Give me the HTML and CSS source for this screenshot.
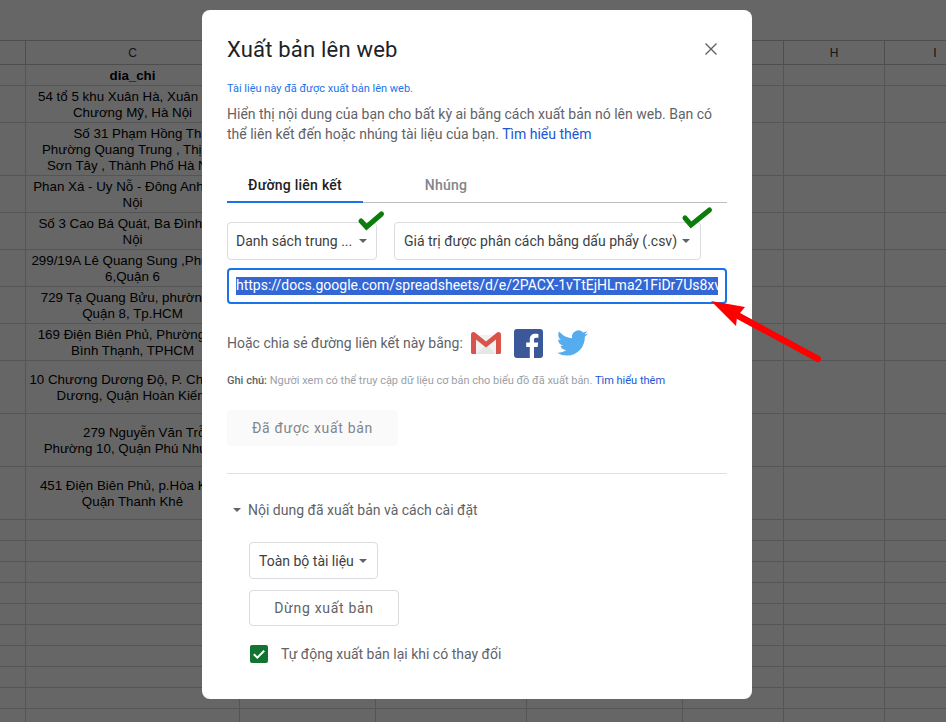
FILE: index.html
```html
<!DOCTYPE html>
<html lang="vi">
<head>
<meta charset="utf-8">
<title>Xuất bản lên web</title>
<link rel="stylesheet" href="styles.css">
</head>
<body>
<div class="sheet">
  <div class="row head"><i></i><div class="cell">C</div><i></i><i></i><i></i><i></i><div class="cell">H</div><div class="cell">I</div></div>
  <div class="row h21"><i></i><div class="cell"><b>dia_chi</b></div><i></i><i></i><i></i><i></i><i></i><i></i></div>
  <div class="row h37"><i></i><div class="cell"><span>54 tổ 5 khu Xuân Hà, Xuân Sơn</span><span>Chương Mỹ, Hà Nội</span></div><i></i><i></i><i></i><i></i><i></i><i></i></div>
  <div class="row h53"><i></i><div class="cell"><span class="shift">Số 31 Phạm Hồng Thái,</span><span>Phường Quang Trung , Thị xã,</span><span>Sơn Tây , Thành Phố Hà Nội</span></div><i></i><i></i><i></i><i></i><i></i><i></i></div>
  <div class="row h37"><i></i><div class="cell"><span>Phan Xá - Uy Nỗ - Đông Anh, Hà,</span><span>Nội</span></div><i></i><i></i><i></i><i></i><i></i><i></i></div>
  <div class="row h37"><i></i><div class="cell"><span>Số 3 Cao Bá Quát, Ba Đình, Hà</span><span>Nội</span></div><i></i><i></i><i></i><i></i><i></i><i></i></div>
  <div class="row h37"><i></i><div class="cell"><span>299/19A Lê Quang Sung ,Phường</span><span>6,Quận 6</span></div><i></i><i></i><i></i><i></i><i></i><i></i></div>
  <div class="row h37"><i></i><div class="cell"><span>729 Tạ Quang Bửu, phường 4,</span><span>Quận 8, Tp.HCM</span></div><i></i><i></i><i></i><i></i><i></i><i></i></div>
  <div class="row h37"><i></i><div class="cell"><span>169 Điện Biên Phủ, Phường 22,</span><span>Bình Thạnh, TPHCM</span></div><i></i><i></i><i></i><i></i><i></i><i></i></div>
  <div class="row h53"><i></i><div class="cell"><span>10 Chương Dương Độ, P. Chương</span><span>Dương, Quận Hoàn Kiếm</span></div><i></i><i></i><i></i><i></i><i></i><i></i></div>
  <div class="row h53"><i></i><div class="cell"><span class="shift-more">279 Nguyễn Văn Trỗi,</span><span>Phường 10, Quận Phú Nhuận</span></div><i></i><i></i><i></i><i></i><i></i><i></i></div>
  <div class="row h53"><i></i><div class="cell"><span>451 Điện Biên Phủ, p.Hòa Khê,</span><span>Quận Thanh Khê</span></div><i></i><i></i><i></i><i></i><i></i><i></i></div>
  <div class="row h21"><i></i><i></i><i></i><i></i><i></i><i></i><i></i><i></i></div>
  <div class="row h21"><i></i><i></i><i></i><i></i><i></i><i></i><i></i><i></i></div>
  <div class="row h21"><i></i><i></i><i></i><i></i><i></i><i></i><i></i><i></i></div>
  <div class="row h21"><i></i><i></i><i></i><i></i><i></i><i></i><i></i><i></i></div>
  <div class="row h21"><i></i><i></i><i></i><i></i><i></i><i></i><i></i><i></i></div>
  <div class="row h21"><i></i><i></i><i></i><i></i><i></i><i></i><i></i><i></i></div>
  <div class="row h21"><i></i><i></i><i></i><i></i><i></i><i></i><i></i><i></i></div>
  <div class="row h21"><i></i><i></i><i></i><i></i><i></i><i></i><i></i><i></i></div>
  <div class="row h21"><i></i><i></i><i></i><i></i><i></i><i></i><i></i><i></i></div>
  <div class="row h21"><i></i><i></i><i></i><i></i><i></i><i></i><i></i><i></i></div>
</div>
<div class="scrim"></div>

<section class="dialog">
  <header class="title-row">
    <h1>Xuất bản lên web</h1>
    <svg class="close" viewBox="0 0 12 12" width="12" height="12"><path d="M.5.5l11 11M11.500.5l-11 11" stroke="#5f6368" stroke-width="1.400" fill="none"/></svg>
  </header>
  <p class="status">Tài liệu này đã được xuất bản lên web.</p>
  <p class="intro">Hiển thị nội dung của bạn cho bất kỳ ai bằng cách xuất bản nó lên web. Bạn có thể liên kết đến hoặc nhúng tài liệu của bạn. <a>Tìm hiểu thêm</a></p>

  <nav class="tabs">
    <div class="tab active">Đường liên kết</div>
    <div class="tab">Nhúng</div>
  </nav>

  <div class="selects">
    <div class="select first">Danh sách trung ...<em class="caret"></em></div>
    <div class="select second">Giá trị được phân cách bằng dấu phẩy (.csv)<em class="caret"></em></div>
  </div>

  <div class="url"><span>https://docs.google.com/spreadsheets/d/e/2PACX-1vTtEjHLma21FiDr7Us8xvW</span></div>

  <div class="share">
    <span>Hoặc chia sẻ đường liên kết này bằng:</span>
    <svg class="gmail" viewBox="0 0 30 22" width="30" height="22">
      <path d="M1.500 3h27v17.500a1.500 1.500 0 0 1-1.500 1.500H3a1.500 1.500 0 0 1-1.500-1.500z" fill="#f1f1f1"/>
      <path d="M5 22l10-9 10 9z" fill="#e6e6e6"/>
      <path d="M0 2.500A2.500 2.500 0 0 1 4 .6L15 9.400 26 .6a2.500 2.500 0 0 1 4 1.900V20.500A1.500 1.500 0 0 1 28.500 22H25V7.500L15 15.500 5 7.500V22H1.500A1.500 1.500 0 0 1 0 20.500z" fill="#d9534a"/>
    </svg>
    <svg class="fb" viewBox="0 0 29 29" width="29" height="29">
      <rect width="29" height="29" rx="3" fill="#3b5998"/>
      <path d="M20 29V18h3.600l.6-4.400H20v-2.700c0-1.300.4-2.100 2.200-2.100h2.200V4.900c-.4 0-1.700-.2-3.200-.2-3.200 0-5.400 2-5.400 5.500v3.400h-3.600V18h3.600v11z" fill="#fff"/>
    </svg>
    <svg class="tw" viewBox="0 0 24 20" width="31" height="26">
      <path d="M23.953 2.570a10 10 0 0 1-2.825.775 4.958 4.958 0 0 0 2.163-2.723c-.951.555-2.005.959-3.127 1.184a4.920 4.920 0 0 0-8.384 4.482C7.690 6.095 4.067 4.130 1.640 1.162a4.822 4.822 0 0 0-.666 2.475c0 1.710.870 3.213 2.188 4.096a4.904 4.904 0 0 1-2.228-.616v.060a4.923 4.923 0 0 0 3.946 4.827 4.996 4.996 0 0 1-2.212.085 4.936 4.936 0 0 0 4.604 3.417 9.867 9.867 0 0 1-6.102 2.105c-.390 0-.779-.023-1.170-.067a13.995 13.995 0 0 0 7.557 2.209c9.053 0 13.998-7.496 13.998-13.985 0-.210 0-.420-.015-.630A9.935 9.935 0 0 0 24 2.590z" fill="#55acee"/>
    </svg>
  </div>

  <p class="note"><b>Ghi chú:</b> Người xem có thể truy cập dữ liệu cơ bản cho biểu đồ đã xuất bản. <a>Tìm hiểu thêm</a></p>

  <div class="btn disabled">Đã được xuất bản</div>
  <hr class="divider">

  <div class="disclosure"><em class="caret"></em><span>Nội dung đã xuất bản và cách cài đặt</span></div>

  <div class="settings">
    <div class="select whole">Toàn bộ tài liệu<em class="caret"></em></div>
    <div class="btn stop">Dừng xuất bản</div>
    <label class="auto">
      <svg class="box" viewBox="0 0 18 18" width="18" height="18"><rect width="18" height="18" rx="2" fill="#137333"/><path d="M3.800 9.200l3.500 3.500 6.900-7" stroke="#fff" stroke-width="2" fill="none"/></svg>
      <span>Tự động xuất bản lại khi có thay đổi</span>
    </label>
  </div>
</section>

<svg class="overlay" viewBox="0 0 946 722" width="946" height="722">
  <path d="M361 221l5.500 6L381.500 214" stroke="#0a7d0a" stroke-width="5" stroke-linecap="round" fill="none"/>
  <path d="M685 218l6 7 18.500-15" stroke="#0a7d0a" stroke-width="5" stroke-linecap="round" fill="none"/>
  <path d="M711 301l34 6-5 6 79 43-2 4-80-43-1 9z" fill="#f00"/>
  <path d="M738 316l80 43" stroke="#f00" stroke-width="6" stroke-linecap="round"/>
</svg>
</body>
</html>
```
FILE: styles.css
```css
* { box-sizing: border-box; }
html, body { margin: 0; height: 722px; overflow: hidden; background: #fff; }
body { font-family: Roboto, "Noto Sans", sans-serif; font-size: 14px; }

/* spreadsheet behind the dialog */
.sheet { padding-top: 40px; width: 986px; height: 722px; overflow: hidden; font-family: "Liberation Sans", Arial, sans-serif; font-size: 13.33px; line-height: 16px; color: #000; }
.row { display: grid; grid-template-columns: 26px 214px 136px 151px 156px 101px 101px 101px; border-bottom: 1px solid #d4d4d4; }
.row > * { border-right: 1px solid #d4d4d4; min-width: 0; }
.head { height: 25px; border-top: 1px solid #c0c0c0; border-bottom-color: #c0c0c0; font-size: 12px; color: #333; }
.head > * { border-right-color: #c0c0c0; }
.h21 { height: 21px; }
.h37 { height: 37px; }
.h53 { height: 53px; }
.cell { display: flex; flex-direction: column; justify-content: center; align-items: center; padding-top: 1px; white-space: nowrap; }
.cell span { display: block; text-align: center; }
.cell .shift { padding-left: 24px; }
.cell .shift-more { padding-left: 30px; }
.scrim { position: absolute; inset: 0; background: rgba(0, 0, 0, .6); }

/* dialog */
.dialog { position: absolute; left: 202px; top: 10px; width: 550px; height: 689px; padding: 0 25px; background: #fff; border-radius: 8px; }
.title-row { display: flex; justify-content: space-between; align-items: center; height: 40px; margin-top: 19px; padding-right: 10px; }
h1 { margin: 0; font-size: 22px; font-weight: 400; letter-spacing: .2px; color: #202124; }
.status { margin: 12px 0 0; font-size: 11px; line-height: 16px; color: #1a73e8; }
.intro { margin: 7px 0 0; font-size: 14px; line-height: 20px; color: #5f6368; }
a { color: #1a56d6; text-decoration: none; }

.tabs { display: flex; margin-top: 25px; height: 34px; border-bottom: 1px solid #bdbdbd; }
.tab { width: 166px; text-align: center; line-height: 32px; font-weight: 500; letter-spacing: .25px; color: #80868b; }
.tab.active { width: 136px; height: 34px; color: #202124; border-bottom: 2px solid #1a73e8; }

.selects { display: flex; gap: 17px; margin-top: 19px; }
.select { display: flex; align-items: center; justify-content: space-between; height: 38px; padding: 0 9px; border: 1px solid #dadce0; border-radius: 4px; color: #3c4043; white-space: nowrap; }
.first { width: 150px; padding-left: 8px; }
.second { width: 307px; padding-right: 10px; }
.caret { display: block; width: 0; height: 0; border: 4px solid transparent; border-top-color: #5f6368; border-bottom: 0; }

.url { height: 36px; margin-top: 8px; padding: 7px 7px; border: 2px solid #1a73e8; border-radius: 4px; overflow: hidden; white-space: nowrap; }
.url span { display: inline-block; max-width: 100%; overflow: hidden; height: 18px; line-height: 17px; background: #3367d6; color: #fff; }

.share { display: flex; align-items: center; margin-top: 24px; height: 30px; color: #5f6368; }
.gmail { margin-left: 8px; }
.fb { margin-left: 13px; }
.tw { margin-left: 14px; }

.note { margin: 15px 0 0; font-size: 11px; line-height: 16px; color: #9aa0a6; }
.note b { color: #5f6368; font-weight: 500; }

.btn { display: flex; align-items: center; justify-content: center; border-radius: 4px; font-weight: 400; letter-spacing: .7px; }
.disabled { width: 171px; height: 36px; margin-top: 21px; background: #fafafa; color: #80868b; }
.divider { margin: 27px 0 0; border: 0; border-top: 1px solid #e0e0e0; }

.disclosure { display: flex; align-items: center; gap: 7px; height: 20px; margin-top: 26px; padding-left: 6px; color: #5f6368; }
.settings { display: flex; flex-direction: column; align-items: flex-start; margin: 22px 0 0 22px; }
.whole { width: 129px; height: 37px; padding: 0 10px 0 9px; }
.stop { width: 150px; height: 36px; margin-top: 11px; border: 1px solid #dadce0; color: #5f6368; }
.auto { display: flex; align-items: center; gap: 13px; margin: 19px 0 0 1px; color: #5f6368; }

.overlay { position: absolute; left: 0; top: 0; pointer-events: none; }
```
